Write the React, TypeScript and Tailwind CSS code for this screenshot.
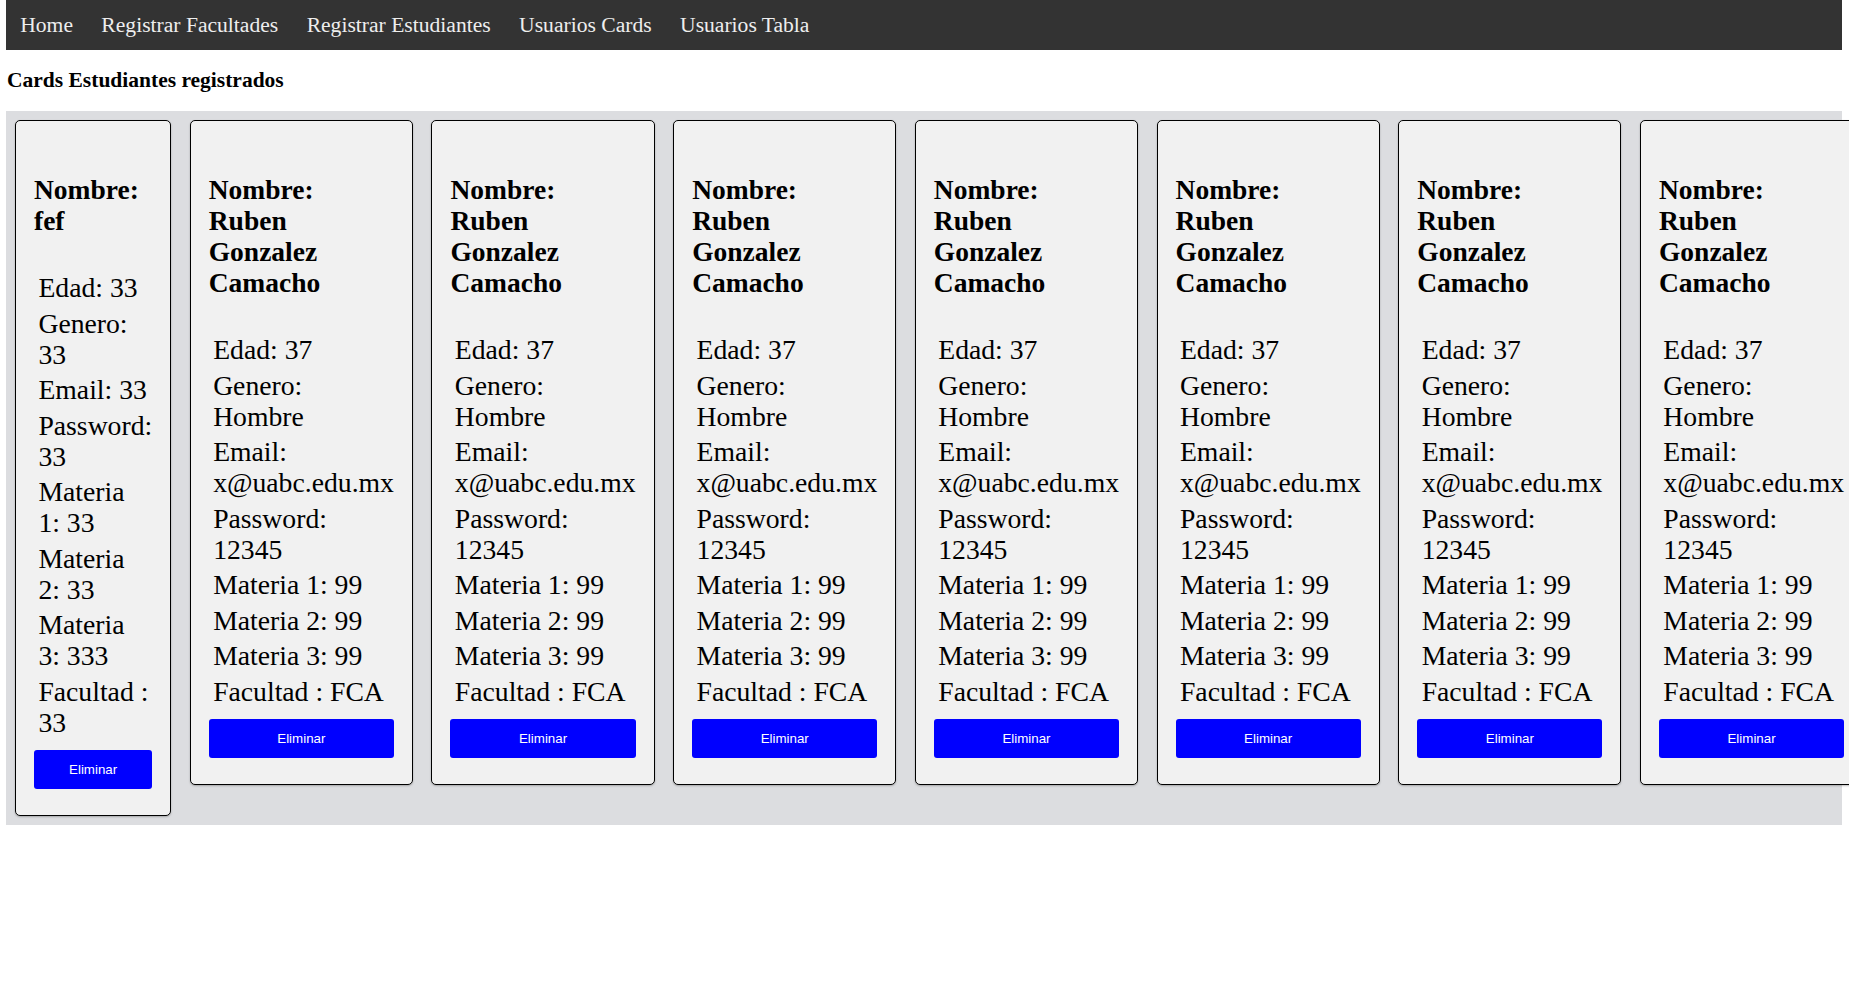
import React from 'react'

interface Estudiante {
  nombre: string
  edad: string
  genero: string
  email: string
  password: string
  materia1: string
  materia2: string
  materia3: string
  facultad: string
}

const ruben: Estudiante = {
  nombre: 'Ruben Gonzalez Camacho',
  edad: '37',
  genero: 'Hombre',
  email: 'x@uabc.edu.mx',
  password: '12345',
  materia1: '99',
  materia2: '99',
  materia3: '99',
  facultad: 'FCA',
}

const estudiantes: Estudiante[] = [
  {
    nombre: 'fef',
    edad: '33',
    genero: '33',
    email: '33',
    password: '33',
    materia1: '33',
    materia2: '33',
    materia3: '333',
    facultad: '33',
  },
  ...Array.from({ length: 7 }, () => ruben),
]

const links = ['Home', 'Registrar Facultades', 'Registrar Estudiantes', 'Usuarios Cards', 'Usuarios Tabla']

function Card({ e }: { e: Estudiante }) {
  return (
    // cards shrink to their longest word, like the original flex row
    <div className="w-min shrink-0 rounded-[5px] border border-black bg-[#f1f1f1] px-[18px] pt-[53px] pb-[26px] shadow-[0_1px_2px_rgba(0,0,0,0.25)]">
      <h3 className="mb-[36px] text-[27.5px] font-bold leading-[31px]">Nombre: {e.nombre}</h3>
      <div className="flex flex-col gap-[4.5px] pl-[4.4px] text-[27.7px] leading-[31px]">
        <p>Edad: {e.edad}</p>
        <p>Genero: {e.genero}</p>
        <p>Email: {e.email}</p>
        <p>Password: {e.password}</p>
        <p>Materia 1: {e.materia1}</p>
        <p>Materia 2: {e.materia2}</p>
        <p>Materia 3: {e.materia3}</p>
        <p>Facultad : {e.facultad}</p>
      </div>
      <button className="mt-[12.5px] h-[39px] w-full rounded-[3px] bg-[#0000ff] font-['Liberation_Sans',Arial,sans-serif] text-[13.33px] text-white">
        Eliminar
      </button>
    </div>
  )
}

export default function App() {
  return (
    <div className="min-h-screen overflow-hidden bg-white pl-[6px] pr-[7px] font-['Liberation_Serif','Times_New_Roman',serif] text-black">
      {/* Navbar */}
      <nav className="flex h-[50px] items-center bg-[#333333]">
        {links.map((l) => (
          <a key={l} className="px-[14.2px] text-[21.6px] leading-[50px] text-[#eeeeee]">
            {l}
          </a>
        ))}
      </nav>

      <h3 className="mt-[18px] mb-[18.5px] pl-[1px] text-[21.5px] font-bold leading-[24.6px]">
        Cards Estudiantes registrados
      </h3>

      {/* Cards */}
      <div className="flex items-start gap-[18.5px] bg-[#dcdde0] p-[9px]">
        {estudiantes.map((e, i) => (
          <Card key={i} e={e} />
        ))}
      </div>
    </div>
  )
}
